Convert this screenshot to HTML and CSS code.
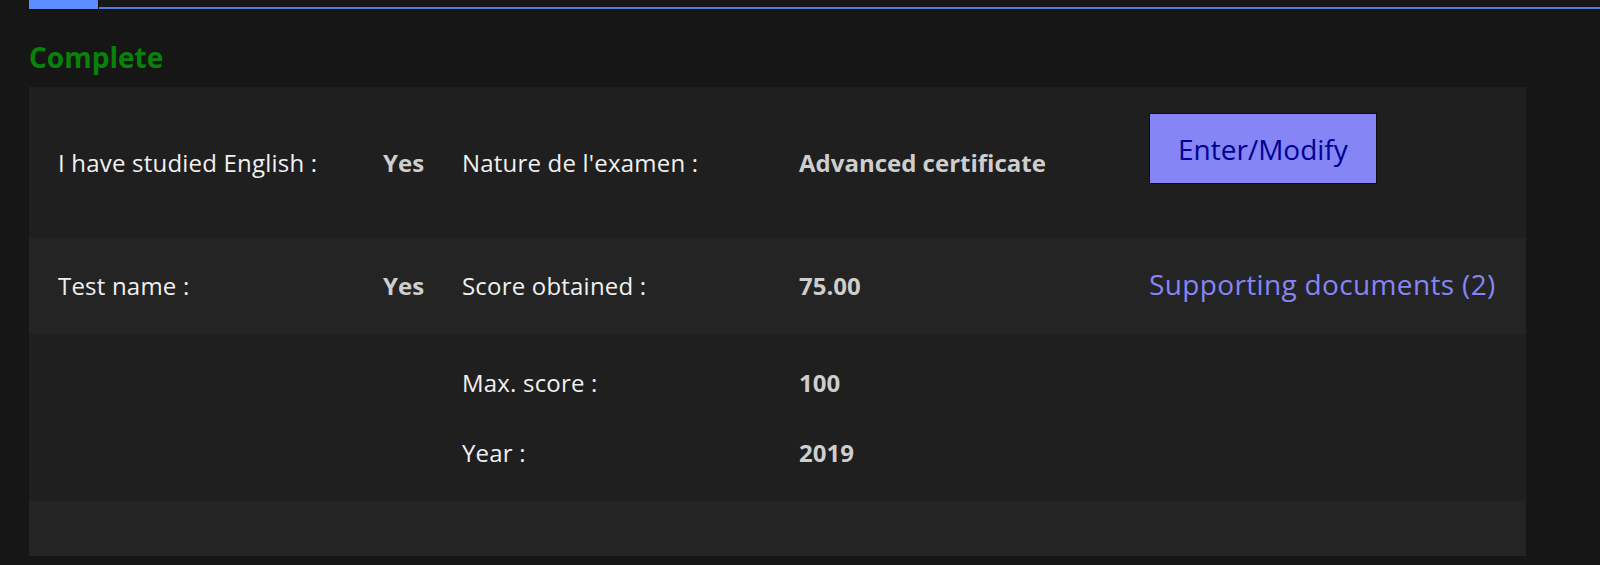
FILE: index.html
```html
<!DOCTYPE html>
<html lang="en">
<head>
<meta charset="utf-8">
<title>English level</title>
<link rel="stylesheet" href="styles.css">
</head>
<body>
<nav class="tabs">
  <span class="tab-active"></span>
  <span class="tab-line"></span>
</nav>
<main class="content">
  <h2 class="status">Complete</h2>
  <section class="card">
    <div class="row row-odd row-first">
      <span class="label">I have studied English :</span>
      <span class="value">Yes</span>
      <span class="label">Nature de l'examen :</span>
      <span class="value">Advanced certificate</span>
      <button class="btn" type="button">Enter/Modify</button>
    </div>
    <div class="row row-even row-second">
      <span class="label">Test name :</span>
      <span class="value">Yes</span>
      <span class="label">Score obtained :</span>
      <span class="value">75.00</span>
      <a class="link" href="#">Supporting documents (2)</a>
    </div>
    <div class="row row-odd row-third">
      <span class="label col3">Max. score :</span>
      <span class="value col4">100</span>
      <span class="label col3">Year :</span>
      <span class="value col4">2019</span>
    </div>
    <div class="row row-even row-empty"></div>
  </section>
</main>
</body>
</html>
```
FILE: styles.css
```css
* { box-sizing: border-box; }

html, body {
  margin: 0;
  padding: 0;
  background: #161616;
  font-family: "Open Sans", "Noto Sans", "DejaVu Sans", sans-serif;
  color: #eeeeee;
}

.tabs {
  display: flex;
  height: 10px;
  padding-left: 29px;
}

.tab-active {
  width: 70px;
  height: 10px;
  background: #5d8dff;
  border-right: 1px solid #0c0c0c;
  border-bottom: 1px solid #0c0c0c;
}

.tab-line {
  flex: 1;
  height: 10px;
  border-top: 7px solid #171717;
  background: #4a7de8;
  border-bottom: 1px solid #0c0c0c;
}

.content {
  padding-left: 29px;
  width: 1526px;
}

.status {
  margin: 29px 0 12px;
  font-size: 28px;
  line-height: 36px;
  font-weight: 700;
  color: #08820a;
}

.card {
  display: flex;
  flex-direction: column;
}

.row {
  display: grid;
  grid-template-columns: 325px 79px 337px 350px 1fr;
  align-items: center;
  padding: 0 29px;
}

.row-odd { background: #1f1f1f; }
.row-even { background: #242424; }

.row-first { height: 151px; }
.row-second { height: 96px; }
.row-third {
  height: 167px;
  row-gap: 34px;
  align-content: center;
}
.row-empty { height: 55px; }

.col3 { grid-column: 3; }
.col4 { grid-column: 4; }

.label {
  font-size: 24px;
  line-height: 36px;
  letter-spacing: 0.2px;
  color: #f0f0f0;
}

.value {
  font-size: 24px;
  line-height: 36px;
  font-weight: 700;
  color: #cecece;
}

.btn {
  align-self: start;
  justify-self: start;
  margin-top: 26px;
  height: 71px;
  padding: 0 28px;
  background: #8585f6;
  color: #000091;
  border: 1px solid #0e0e0e;
  font-family: inherit;
  font-size: 28px;
  line-height: 36px;
  cursor: pointer;
}

.link {
  font-size: 28px;
  line-height: 36px;
  letter-spacing: 0.35px;
  color: #8585f6;
  text-decoration: none;
  margin-bottom: 4px;
  white-space: nowrap;
}
```
